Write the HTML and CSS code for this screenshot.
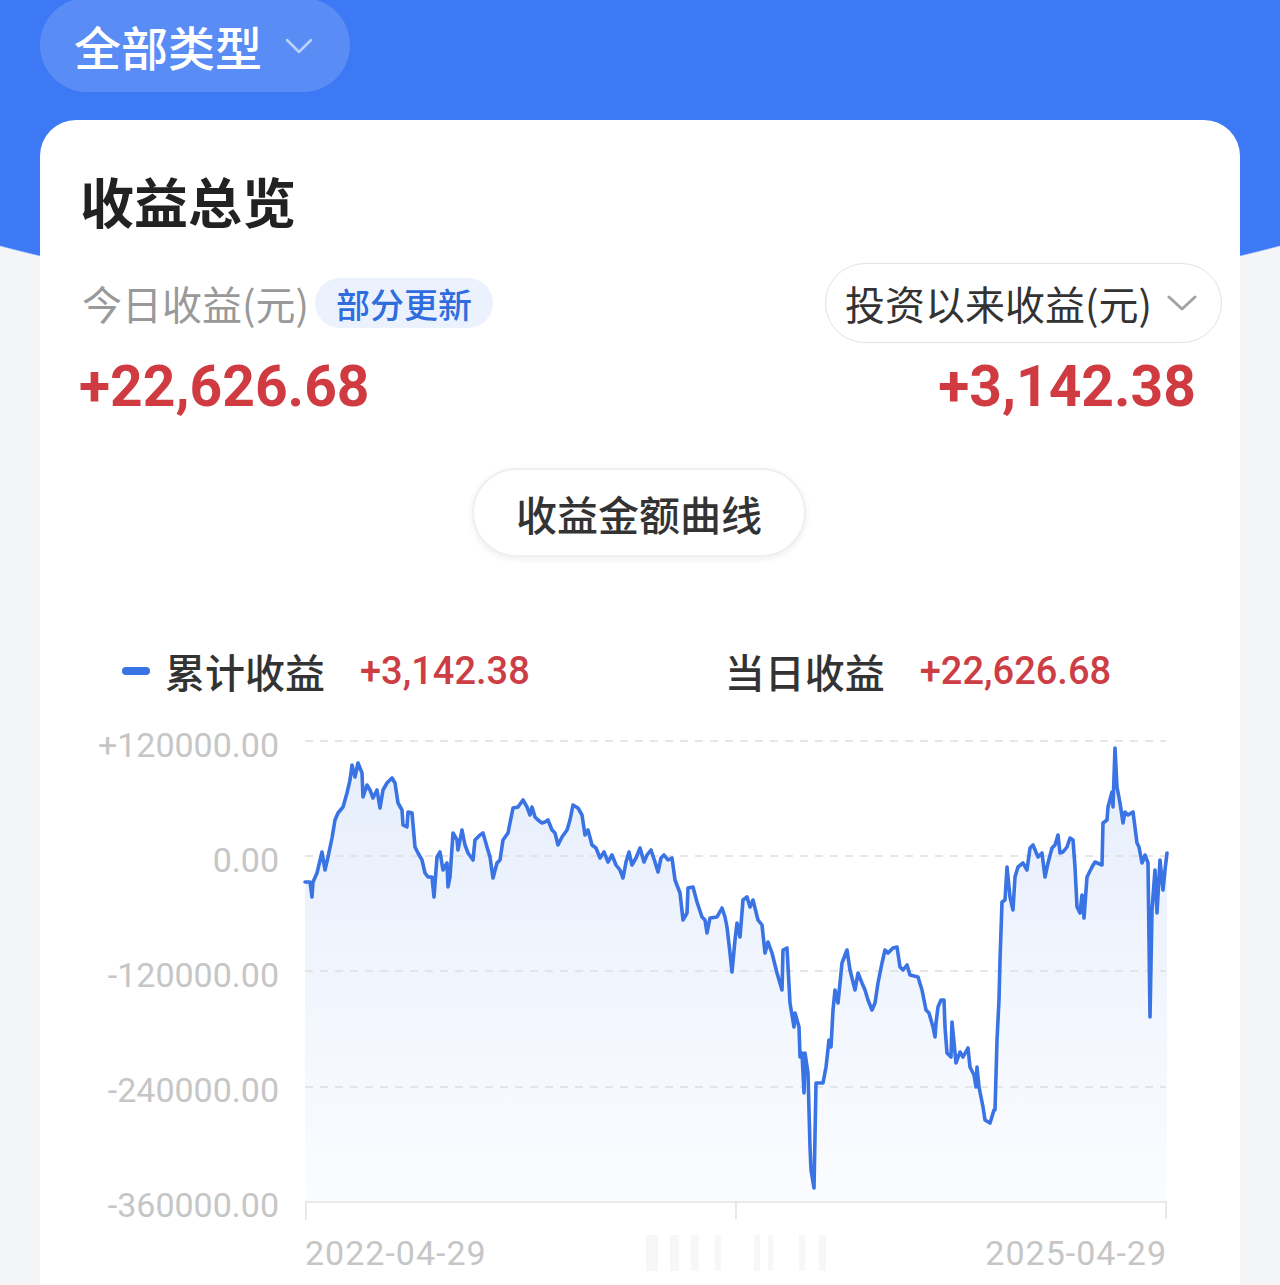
FILE: index.html
```html
<!DOCTYPE html>
<html lang="zh-CN">
<head>
<meta charset="utf-8">
<title>收益总览</title>
<link rel="stylesheet" href="styles.css">
</head>
<body>
<div class="page">
  <div class="type-pill">
    <span class="type-text">全部类型</span>
    <svg class="chev-w" width="28" height="17" viewBox="0 0 28 17"><path d="M2 2 L14 14 L26 2" fill="none" stroke="rgba(255,255,255,0.6)" stroke-width="2.5" stroke-linecap="round" stroke-linejoin="round"/></svg>
  </div>

  <section class="card">
    <h1 class="title">收益总览</h1>

    <div class="summary-row">
      <div class="today-label">
        <span class="muted">今日收益(元)</span>
        <span class="badge">部分更新</span>
      </div>
      <div class="select-pill">
        <span>投资以来收益(元)</span>
        <svg class="chev-g" width="30" height="16" viewBox="0 0 30 16"><path d="M2 2 L15 14 L28 2" fill="none" stroke="#a3a3a3" stroke-width="3" stroke-linecap="round" stroke-linejoin="round"/></svg>
      </div>
    </div>

    <div class="values-row">
      <span class="big-num first">+22,626.68</span>
      <span class="big-num">+3,142.38</span>
    </div>

    <div class="btn-row">
      <button class="curve-btn">收益金额曲线</button>
    </div>

    <div class="legend">
      <span class="dash"></span>
      <span class="lg-label">累计收益</span>
      <span class="lg-val">+3,142.38</span>
      <span class="lg-label second">当日收益</span>
      <span class="lg-val">+22,626.68</span>
    </div>

    <div class="chart">
      <div class="y-axis">
        <span>+120000.00</span>
        <span>0.00</span>
        <span>-120000.00</span>
        <span>-240000.00</span>
        <span>-360000.00</span>
      </div>
      <svg class="plot" width="870" height="500" viewBox="300 725 870 500">
        <defs>
          <linearGradient id="area" x1="0" y1="0" x2="0" y2="1">
            <stop offset="0" stop-color="#e6eefc"/>
            <stop offset="1" stop-color="#fbfcff"/>
          </linearGradient>
        </defs>
        <path fill="url(#area)" d="M305,882 L310,882 312,897 313,882 317,873 322,852 325,870 328,857 332,838 335,820 338,813 343,807 347,793 350,780 352,765 355,777 358,763 362,773 363,797 367,785 370,790 373,798 377,790 380,808 383,790 387,783 392,778 395,783 398,803 402,810 403,825 407,827 408,812 412,813 415,847 418,853 422,860 425,873 428,877 432,877 434,897 437,857 440,852 443,870 447,863 448,887 450,877 453,833 457,840 458,850 462,830 465,845 468,853 473,860 475,840 480,835 483,833 487,847 490,857 493,878 497,863 500,860 503,840 508,833 513,808 518,807 523,800 527,807 530,815 532,807 535,817 538,820 542,823 545,822 548,820 552,830 555,833 558,845 562,837 567,830 570,820 573,805 578,808 582,815 585,835 588,830 592,845 596,848 600,858 604,852 608,862 612,855 616,865 620,870 623,878 626,862 629,852 632,865 636,858 640,848 644,862 647,855 651,850 655,862 658,872 661,858 664,855 668,860 672,858 675,880 680,893 683,920 687,913 688,888 693,887 697,902 702,917 705,920 707,933 710,918 717,917 722,908 725,917 727,927 730,953 732,972 735,940 737,923 740,937 743,900 747,897 750,907 753,900 758,920 762,925 765,953 768,942 772,953 777,973 782,990 783,950 787,948 790,1003 794,1027 795,1013 799,1027 800,1057 802,1053 804,1093 805,1053 808,1073 810,1147 811,1170 814,1188 816,1083 823,1083 826,1067 829,1040 831,1047 833,1010 835,990 838,1003 842,963 847,950 850,970 855,990 858,973 862,983 865,990 868,1000 872,1010 875,1003 878,983 882,963 885,950 888,953 893,948 897,947 900,967 903,970 907,965 910,975 918,977 922,990 924,1000 926,1010 929,1013 933,1027 935,1037 936,1023 938,1007 941,1000 944,1000 945,1027 947,1053 951,1057 952,1022 956,1063 960,1052 963,1057 968,1048 970,1067 974,1075 976,1087 977,1067 979,1087 983,1107 985,1120 990,1123 994,1110 995,1110 997,1040 999,1000 1000,960 1002,902 1005,900 1007,867 1010,897 1013,910 1015,877 1018,867 1023,863 1027,870 1030,848 1033,845 1038,857 1042,853 1045,877 1048,863 1052,848 1055,845 1058,835 1060,853 1063,852 1067,847 1070,838 1073,840 1075,867 1077,907 1080,913 1082,895 1084,918 1087,877 1092,867 1095,862 1102,865 1103,823 1107,820 1108,807 1112,792 1113,807 1115,748 1117,787 1120,803 1123,823 1125,812 1128,815 1133,812 1137,843 1139,847 1142,863 1145,855 1148,863 1150,1017 1152,910 1155,870 1157,913 1160,860 1163,890 1165,870 1167,853 L1167,1202 L305,1202 Z"/>
        <g class="grid" stroke="#dedede" stroke-width="1.6" stroke-dasharray="8 7">
          <line x1="305" y1="741" x2="1166" y2="741"/>
          <line x1="305" y1="856" x2="1166" y2="856"/>
          <line x1="305" y1="971" x2="1166" y2="971"/>
          <line x1="305" y1="1087" x2="1166" y2="1087"/>
        </g>
        <g stroke="#e2e2e2" stroke-width="1.6">
          <line x1="305" y1="1202" x2="1167" y2="1202"/>
          <line x1="305.8" y1="1202" x2="305.8" y2="1220"/>
          <line x1="736" y1="1202" x2="736" y2="1219"/>
          <line x1="1166.2" y1="1202" x2="1166.2" y2="1219"/>
        </g>
        <path fill="none" stroke="#3a73e3" stroke-width="3.6" stroke-linejoin="round" stroke-linecap="round" d="M305,882 L310,882 312,897 313,882 317,873 322,852 325,870 328,857 332,838 335,820 338,813 343,807 347,793 350,780 352,765 355,777 358,763 362,773 363,797 367,785 370,790 373,798 377,790 380,808 383,790 387,783 392,778 395,783 398,803 402,810 403,825 407,827 408,812 412,813 415,847 418,853 422,860 425,873 428,877 432,877 434,897 437,857 440,852 443,870 447,863 448,887 450,877 453,833 457,840 458,850 462,830 465,845 468,853 473,860 475,840 480,835 483,833 487,847 490,857 493,878 497,863 500,860 503,840 508,833 513,808 518,807 523,800 527,807 530,815 532,807 535,817 538,820 542,823 545,822 548,820 552,830 555,833 558,845 562,837 567,830 570,820 573,805 578,808 582,815 585,835 588,830 592,845 596,848 600,858 604,852 608,862 612,855 616,865 620,870 623,878 626,862 629,852 632,865 636,858 640,848 644,862 647,855 651,850 655,862 658,872 661,858 664,855 668,860 672,858 675,880 680,893 683,920 687,913 688,888 693,887 697,902 702,917 705,920 707,933 710,918 717,917 722,908 725,917 727,927 730,953 732,972 735,940 737,923 740,937 743,900 747,897 750,907 753,900 758,920 762,925 765,953 768,942 772,953 777,973 782,990 783,950 787,948 790,1003 794,1027 795,1013 799,1027 800,1057 802,1053 804,1093 805,1053 808,1073 810,1147 811,1170 814,1188 816,1083 823,1083 826,1067 829,1040 831,1047 833,1010 835,990 838,1003 842,963 847,950 850,970 855,990 858,973 862,983 865,990 868,1000 872,1010 875,1003 878,983 882,963 885,950 888,953 893,948 897,947 900,967 903,970 907,965 910,975 918,977 922,990 924,1000 926,1010 929,1013 933,1027 935,1037 936,1023 938,1007 941,1000 944,1000 945,1027 947,1053 951,1057 952,1022 956,1063 960,1052 963,1057 968,1048 970,1067 974,1075 976,1087 977,1067 979,1087 983,1107 985,1120 990,1123 994,1110 995,1110 997,1040 999,1000 1000,960 1002,902 1005,900 1007,867 1010,897 1013,910 1015,877 1018,867 1023,863 1027,870 1030,848 1033,845 1038,857 1042,853 1045,877 1048,863 1052,848 1055,845 1058,835 1060,853 1063,852 1067,847 1070,838 1073,840 1075,867 1077,907 1080,913 1082,895 1084,918 1087,877 1092,867 1095,862 1102,865 1103,823 1107,820 1108,807 1112,792 1113,807 1115,748 1117,787 1120,803 1123,823 1125,812 1128,815 1133,812 1137,843 1139,847 1142,863 1145,855 1148,863 1150,1017 1152,910 1155,870 1157,913 1160,860 1163,890 1165,870 1167,853"/>
      </svg>
    </div>

    <div class="x-axis">
      <span>2022-04-29</span>
      <svg class="mark" width="180" height="36" viewBox="0 0 180 36">
        <g fill="#f7f7f7">
          <rect x="0" y="0" width="12" height="36"/>
          <rect x="24" y="0" width="9" height="36"/>
          <rect x="45" y="0" width="8" height="36"/>
          <rect x="69" y="0" width="6" height="36"/>
          <rect x="108" y="0" width="6" height="36"/>
          <rect x="122" y="0" width="5" height="36"/>
          <rect x="153" y="0" width="6" height="36"/>
          <rect x="173" y="0" width="7" height="36"/>
        </g>
      </svg>
      <span>2025-04-29</span>
    </div>
  </section>
</div>
</body>
</html>
```

FILE: styles.css
```css
html, body {
  margin: 0;
  padding: 0;
}

body {
  background: #f4f5f7;
  font-family: "Noto Sans CJK SC", "Noto Sans", sans-serif;
}

.page {
  min-height: 1285px;
  padding: 0 40px;
  box-sizing: border-box;
  overflow: hidden;
  background: radial-gradient(1005px 320px at 640px 0, #3d79f4 99.6%, #f4f5f7 100%) no-repeat, #f4f5f7;
}

/* header type selector */
.type-pill {
  display: flex;
  align-items: center;
  width: 310px;
  height: 94px;
  margin-top: -2px;
  box-sizing: border-box;
  padding-left: 34px;
  border-radius: 47px;
  background: rgba(255, 255, 255, 0.15);
}

.type-text {
  color: #ffffff;
  font-size: 47px;
  font-weight: 500;
  line-height: 1;
}

.chev-w {
  margin-left: 23px;
  margin-top: 2px;
  display: block;
}

/* card */
.card {
  margin-top: 28px;
  background: #ffffff;
  border-radius: 36px 36px 0 0;
  padding: 45px 44px 40px 42px;
  min-height: 1200px;
  box-sizing: border-box;
}

.title {
  margin: 0;
  margin-left: -2px;
  font-size: 54px;
  line-height: 72px;
  font-weight: 700;
  color: #222222;
}

.summary-row {
  display: flex;
  justify-content: space-between;
  align-items: center;
  height: 80px;
  margin-top: 26px;
  margin-right: -26px;
}

.today-label {
  display: flex;
  align-items: center;
}

.muted {
  font-size: 40px;
  line-height: 1;
  color: #999999;
}

.badge {
  display: flex;
  align-items: center;
  height: 50px;
  margin-left: 6px;
  padding: 0 21px;
  border-radius: 25px;
  background: #ebf2fe;
  color: #2f6ddf;
  font-size: 34px;
  font-weight: 500;
}

.select-pill {
  display: flex;
  align-items: center;
  height: 80px;
  box-sizing: border-box;
  padding: 0 24px 0 19px;
  border: 1.5px solid #e3e3e3;
  border-radius: 40px;
  font-size: 40px;
  color: #333333;
}

.chev-g {
  display: block;
  margin-left: 15px;
}

.values-row {
  display: flex;
  justify-content: space-between;
  margin-top: 12px;
}

.big-num {
  font-family: Roboto, "Liberation Sans", sans-serif;
  font-weight: 700;
  font-size: 57px;
  line-height: 64px;
  color: #cf3b41;
}

.big-num.first {
  margin-left: -3px;
}

.btn-row {
  display: flex;
  justify-content: center;
  margin-top: 49px;
}

.curve-btn {
  width: 334px;
  height: 89px;
  border-radius: 45px;
  border: 2px solid #efefef;
  background: #ffffff;
  box-shadow: 0 2px 7px rgba(0, 0, 0, 0.07);
  font-family: "Noto Sans CJK SC", sans-serif;
  font-size: 41px;
  font-weight: 500;
  color: #333333;
  padding: 0;
}

/* legend */
.legend {
  display: flex;
  align-items: center;
  height: 48px;
  margin-top: 90px;
  padding-left: 40px;
}

.dash {
  width: 28px;
  height: 8px;
  border-radius: 4px;
  background: #3a73e4;
  margin-right: 15px;
}

.lg-label {
  font-size: 40px;
  font-weight: 500;
  color: #333333;
  line-height: 48px;
}

.lg-label.second {
  margin-left: 195px;
}

.lg-val {
  margin-left: 35px;
  font-family: Roboto, "Liberation Sans", sans-serif;
  font-size: 38px;
  font-weight: 500;
  color: #cc3d44;
  line-height: 48px;
}

/* chart */
.chart {
  display: flex;
  margin-top: 30px;
  height: 500px;
}

.y-axis {
  width: 197px;
  flex: none;
  display: flex;
  flex-direction: column;
  justify-content: space-between;
  align-items: flex-end;
}

.y-axis span,
.x-axis span {
  font-family: Roboto, "Liberation Sans", sans-serif;
  font-size: 34px;
  line-height: 40px;
  color: #c6c6c6;
}

.plot {
  display: block;
  flex: none;
  margin-left: 21px;
}

.x-axis {
  display: flex;
  justify-content: space-between;
  align-items: center;
  width: 862px;
  margin-left: 223px;
  margin-top: 8px;
}

.x-axis span {
  letter-spacing: 1px;
}

.mark {
  display: block;
}
```
